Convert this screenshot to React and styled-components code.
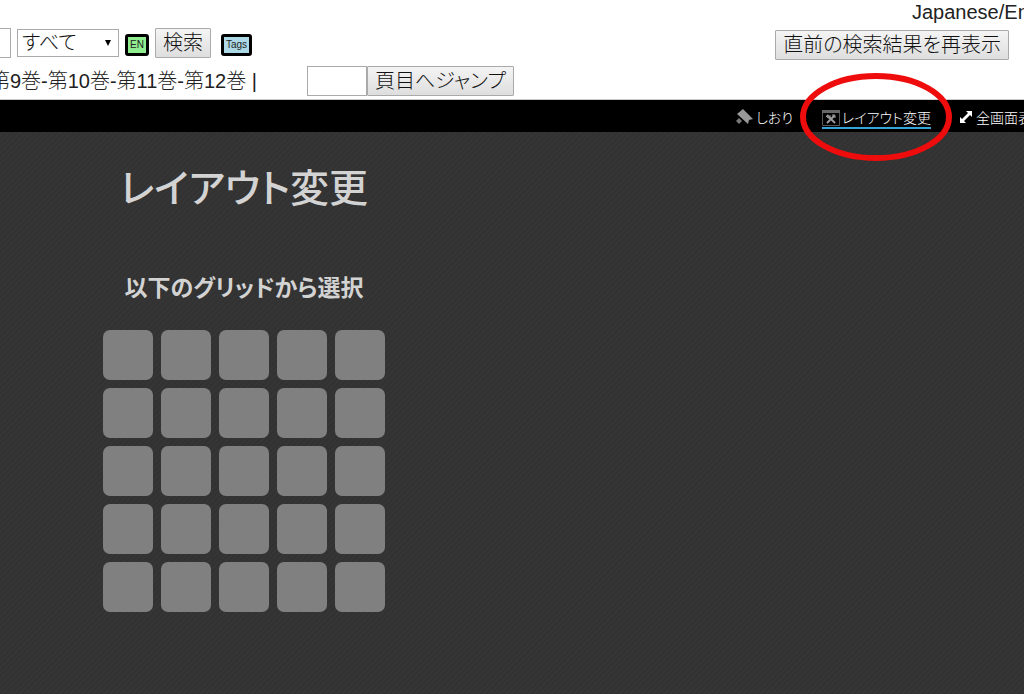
import { useState } from 'react';
import styled, { createGlobalStyle } from 'styled-components';

const cells = Array.from({ length: 25 }, (_, i) => ({ row: Math.floor(i / 5) + 1, col: (i % 5) + 1 }));

export default function App() {
  const [category, setCategory] = useState('all');
  const [page, setPage] = useState('');
  const [keyword, setKeyword] = useState('');

  return (
    <>
      <GlobalStyle />
      <Page>
        <Header>
          <LanguageRow>
            <LanguageLink href="#language">Japanese/English</LanguageLink>
          </LanguageRow>
          <SearchRow>
            <KeywordInput aria-label="検索語" value={keyword} onChange={(e) => setKeyword(e.target.value)} />
            <SelectBox>
              <Select aria-label="検索対象" value={category} onChange={(e) => setCategory(e.target.value)}>
                <option value="all">すべて</option>
              </Select>
              <Arrow viewBox="0 0 6 6" aria-hidden="true"><path d="M0 0h6L3 6z" /></Arrow>
            </SelectBox>
            <TagButton $color="#90ee90">EN</TagButton>
            <Button>検索</Button>
            <TagButton $color="#add8e6" $spaced>Tags</TagButton>
            <ResultButton>直前の検索結果を再表示</ResultButton>
          </SearchRow>
          <VolumeRow>
            <Volumes><span>第9巻-第10巻-第11巻-第12巻 |</span></Volumes>
            <PageInput aria-label="頁" value={page} onChange={(e) => setPage(e.target.value)} />
            <Button>頁目へジャンプ</Button>
          </VolumeRow>
        </Header>
        <Toolbar>
          <ToolLink href="#bookmark">
            <BookmarkIcon />
            しおり
          </ToolLink>
          <ToolLink href="#layout" $active>
            <LayoutIcon />
            レイアウト変更
            <Marker viewBox="0 0 152 88" aria-hidden="true">
              <ellipse cx="76" cy="44" rx="73" ry="41" fill="none" stroke="#ee0c0c" strokeWidth="6" />
            </Marker>
          </ToolLink>
          <ToolLink href="#fullscreen" $last>
            <ExpandIcon />
            全画面表示
          </ToolLink>
        </Toolbar>
        <Viewer>
          <Panel>
            <Title>レイアウト変更</Title>
            <SubTitle>以下のグリッドから選択</SubTitle>
            <Grid>
              {cells.map((c) => <Cell key={`${c.row}-${c.col}`} aria-label={`${c.row} x ${c.col}`} />)}
            </Grid>
          </Panel>
        </Viewer>
      </Page>
    </>
  );
}

function BookmarkIcon() {
  return (
    <Icon viewBox="0 0 18 18" aria-hidden="true">
      <path fill="#999" d="M1 6 7 1l10 10-4 1-1 4z" />
      <path fill="#777" d="M3 10l3 3-3 3-3-3z" />
    </Icon>
  );
}

function LayoutIcon() {
  return (
    <Icon viewBox="0 0 18 18" aria-hidden="true">
      <path fill="none" stroke="#555" d="M.5 2.5h17v15H.5z" />
      <path fill="#666" d="M0 2h18v3H0z" />
      <path fill="none" stroke="#999" strokeWidth="2" d="M5 7l8 8M13 7l-8 8" />
      <path fill="none" stroke="#999" strokeWidth="1" d="M4 8l2 2h2V7M11 6v3h3" />
    </Icon>
  );
}

function ExpandIcon() {
  return (
    <SmallIcon viewBox="0 0 12 12" aria-hidden="true">
      <path fill="#fff" d="M6 0h6v6l-2-2-6 6 2 2H0V6l2 2 6-6z" />
    </SmallIcon>
  );
}

const GlobalStyle = createGlobalStyle`
  * {
    box-sizing: border-box;
  }
  body {
    margin: 0;
    background: #333;
    font-family: "Liberation Sans", "Noto Sans CJK JP", sans-serif;
    font-weight: 300;
  }
  button, input, select {
    font-family: inherit;
    font-weight: 300;
    margin: 0;
  }
`;

const Page = styled.div`
  min-height: 100vh;
  display: flex;
  flex-direction: column;
  overflow: hidden;
`;

const Header = styled.header`
  background: #fff;
  color: #222;
  font-size: 20px;
  padding-bottom: 3px;
  border-bottom: 1px solid #ccc;
`;

const LanguageRow = styled.div`
  display: flex;
  justify-content: flex-end;
  height: 28px;
`;

const LanguageLink = styled.a`
  width: 112px;
  overflow: hidden;
  white-space: nowrap;
  line-height: 24px;
  color: #222;
  text-decoration: none;
`;

const SearchRow = styled.div`
  display: flex;
  align-items: center;
  gap: 6px;
  height: 30px;
  padding-right: 15px;
`;

const KeywordInput = styled.input`
  width: 11px;
  height: 30px;
  padding: 0;
  border: 1px solid #aaa;
  border-left: 0;
`;

const SelectBox = styled.div`
  position: relative;
  width: 102px;
`;

const Select = styled.select`
  appearance: none;
  display: block;
  width: 100%;
  height: 28px;
  padding: 0 4px;
  border: 1px solid #aaa;
  border-radius: 0;
  background: #fff;
  color: #111;
  font-size: 20px;
  font-feature-settings: "palt";
`;

const Arrow = styled.svg`
  position: absolute;
  right: 8px;
  top: 11px;
  width: 6px;
  height: 6px;
  pointer-events: none;
`;

const Button = styled.button`
  height: 30px;
  padding: 0 7px;
  border: 1px solid #aaa;
  border-radius: 1px;
  background: linear-gradient(#f4f4f4, #dedede);
  color: #111;
  font-size: 20px;
  font-feature-settings: "palt";
  line-height: 26px;
  white-space: nowrap;
`;

const ResultButton = styled(Button)`
  margin-top: 4px;
  margin-left: auto;
`;

const TagButton = styled.button`
  height: 22px;
  margin-top: 4px;
  margin-left: ${(p) => (p.$spaced ? '4px' : '0')};
  padding: 0 2px;
  border: 3px solid #000;
  border-radius: 3px;
  background: ${(p) => p.$color};
  color: #222;
  font-size: 10px;
  line-height: 16px;
`;

const VolumeRow = styled.div`
  display: flex;
  align-items: center;
  height: 30px;
  margin-top: 8px;
`;

const Volumes = styled.div`
  display: flex;
  justify-content: flex-end;
  width: 257px;
  margin-right: 50px;
  overflow: hidden;
  white-space: nowrap;
  line-height: 30px;
`;

const PageInput = styled.input`
  width: 60px;
  height: 30px;
  border: 1px solid #aaa;
  font-size: 20px;
`;

const Toolbar = styled.nav`
  display: flex;
  justify-content: flex-end;
  height: 32px;
  padding-top: 6px;
  background: #000;
`;

const ToolLink = styled.a`
  position: relative;
  display: flex;
  align-items: center;
  gap: 2px;
  height: 23px;
  width: ${(p) => (p.$last ? '64px' : 'auto')};
  margin-right: ${(p) => (p.$last ? '0' : '29px')};
  border-bottom: 2px solid ${(p) => (p.$active ? '#33a5d8' : 'transparent')};
  color: #fff;
  font-size: 14px;
  font-feature-settings: "palt";
  white-space: nowrap;
  text-decoration: none;
`;

const Icon = styled.svg`
  flex: none;
  width: 18px;
  height: 18px;
`;

const SmallIcon = styled.svg`
  flex: none;
  width: 12px;
  height: 12px;
  margin-right: 2px;
`;

/* ring around the active tool */
const Marker = styled.svg`
  position: absolute;
  z-index: 1;
  left: 50%;
  top: 50%;
  width: 152px;
  height: 88px;
  transform: translate(-50%, -50%);
  pointer-events: none;
`;

const Viewer = styled.main`
  flex: 1;
  padding: 30px 103px 80px;
  background: repeating-linear-gradient(135deg, #323232 0 2px, #353535 2px 4px);
`;

const Panel = styled.section`
  width: 282px;
  color: #d3d3d3;
  text-align: center;
  font-feature-settings: "palt";
`;

const Title = styled.h1`
  margin: 0;
  font-size: 39px;
  font-weight: 500;
  line-height: 54px;
  white-space: nowrap;
`;

const SubTitle = styled.h2`
  margin: 56px 0 0;
  font-size: 23px;
  font-weight: 700;
  line-height: 32px;
  white-space: nowrap;
`;

const Grid = styled.div`
  display: grid;
  grid-template-columns: repeat(5, 50px);
  gap: 8px;
  margin-top: 26px;
`;

const Cell = styled.button`
  height: 50px;
  padding: 0;
  border: 0;
  border-radius: 7px;
  background: #808080;
  cursor: pointer;
`;
